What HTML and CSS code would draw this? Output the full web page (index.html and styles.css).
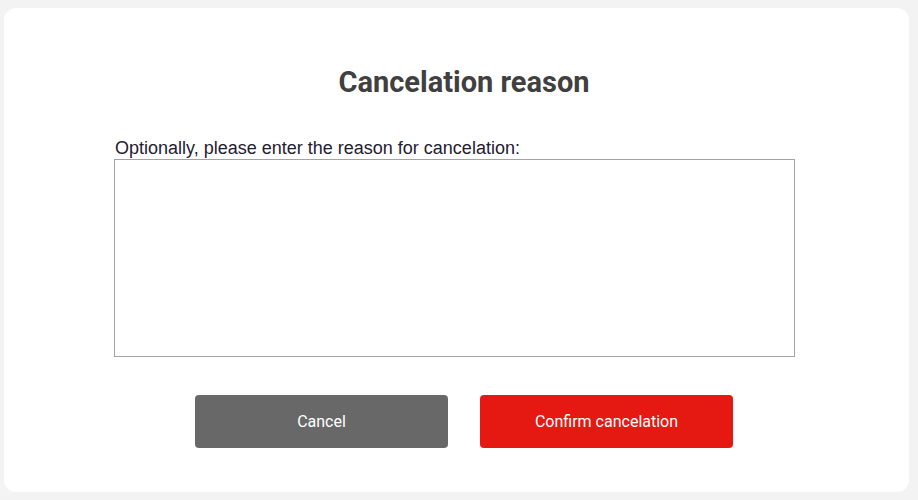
FILE: index.html
```html
<!DOCTYPE html>
<html lang="en">
<head>
<meta charset="utf-8">
<title>Cancelation reason</title>
<link rel="stylesheet" href="styles.css">
</head>
<body>
<div class="dialog">
  <h1 class="title">Cancelation reason</h1>
  <label class="label" for="reason">Optionally, please enter the reason for cancelation:</label>
  <textarea class="reason" id="reason"></textarea>
  <div class="actions">
    <button class="btn btn-cancel">Cancel</button>
    <button class="btn btn-confirm">Confirm cancelation</button>
  </div>
</div>
</body>
</html>
```

FILE: styles.css
```css
html, body {
  margin: 0;
  padding: 0;
  background: #f3f3f3;
}
body {
  padding: 8px 9px 8px 4px;
  height: 500px;
  box-sizing: border-box;
}
.dialog {
  height: 484px;
  box-sizing: border-box;
  background: #ffffff;
  border-radius: 12px;
  padding: 58px 1px 0 16px;
  display: flex;
  flex-direction: column;
}
.title {
  margin: 0;
  font-family: Roboto, "Liberation Sans", sans-serif;
  font-weight: 700;
  font-size: 29px;
  line-height: 32px;
  color: #404040;
  text-align: center;
}
.label {
  display: block;
  margin: 40px 0 1px 95px;
  font-family: "Liberation Sans", Arial, sans-serif;
  font-size: 18px;
  line-height: 20px;
  color: #1f2030;
}
.reason {
  display: block;
  margin: 0 0 0 94px;
  width: 681px;
  height: 198px;
  box-sizing: border-box;
  border: 1px solid #a3a3a3;
  resize: none;
  padding: 2px;
  font-family: "Liberation Sans", Arial, sans-serif;
  font-size: 14px;
}
.actions {
  display: flex;
  justify-content: center;
  gap: 32px;
  margin-top: 38px;
}
.btn {
  width: 253px;
  height: 53px;
  border: none;
  border-radius: 4px;
  color: #ffffff;
  font-family: Roboto, "Liberation Sans", sans-serif;
  font-size: 16px;
  cursor: pointer;
}
.btn-cancel {
  background: #686868;
}
.btn-confirm {
  background: #e51812;
}
```
